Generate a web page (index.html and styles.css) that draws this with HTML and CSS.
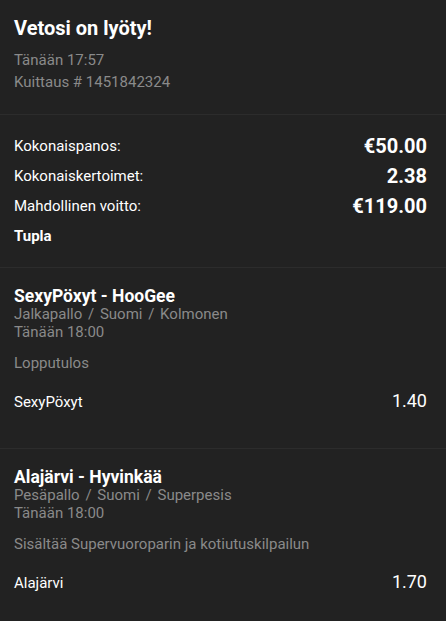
FILE: index.html
```html
<!DOCTYPE html>
<html lang="fi">
<head>
<meta charset="utf-8">
<title>Vetosi on lyöty!</title>
<link rel="stylesheet" href="styles.css">
</head>
<body>
<div class="receipt">
  <section class="sec head">
    <h1 class="title">Vetosi on lyöty!</h1>
    <div class="meta-line">Tänään 17:57</div>
    <div class="meta-line">Kuittaus # 1451842324</div>
  </section>
  <section class="sec totals">
    <div class="row"><span class="lbl">Kokonaispanos:</span><span class="val">€50.00</span></div>
    <div class="row"><span class="lbl">Kokonaiskertoimet:</span><span class="val">2.38</span></div>
    <div class="row"><span class="lbl">Mahdollinen voitto:</span><span class="val">€119.00</span></div>
    <div class="row"><span class="lbl type">Tupla</span></div>
  </section>
  <section class="sec event">
    <div class="ev-title">SexyPöxyt - HooGee</div>
    <div class="ev-meta">Jalkapallo <span class="sep">/</span> Suomi <span class="sep">/</span> Kolmonen</div>
    <div class="ev-meta">Tänään 18:00</div>
    <div class="ev-market">Lopputulos</div>
    <div class="sel"><span class="sel-name">SexyPöxyt</span><span class="sel-odds">1.40</span></div>
  </section>
  <section class="sec event">
    <div class="ev-title">Alajärvi - Hyvinkää</div>
    <div class="ev-meta">Pesäpallo <span class="sep">/</span> Suomi <span class="sep">/</span> Superpesis</div>
    <div class="ev-meta">Tänään 18:00</div>
    <div class="ev-market">Sisältää Supervuoroparin ja kotiutuskilpailun</div>
    <div class="sel"><span class="sel-name">Alajärvi</span><span class="sel-odds">1.70</span></div>
  </section>
</div>
</body>
</html>
```
FILE: styles.css
```css
html, body {
  margin: 0;
  padding: 0;
  background: #222222;
}
body {
  font-family: Roboto, "Liberation Sans", sans-serif;
  color: #ffffff;
  font-size: 15px;
}
.receipt {
  display: flex;
  flex-direction: column;
}
.sec {
  padding: 0 19px 0 14px;
  border-bottom: 1px solid #2c2c2c;
}
.head {
  padding-top: 16px;
  padding-bottom: 21px;
}
.title {
  margin: 0 0 10px;
  font-size: 20px;
  font-weight: 700;
  line-height: 24px;
}
.meta-line {
  color: #8a8a8a;
  line-height: 21.5px;
}
.totals {
  padding-top: 16px;
  padding-bottom: 16px;
}
.row {
  height: 30px;
  display: flex;
  align-items: center;
  justify-content: space-between;
}
.val {
  font-size: 20px;
  font-weight: 700;
}
.type {
  font-weight: 700;
}
.event {
  padding-top: 19px;
  padding-bottom: 37px;
}
.ev-title {
  font-size: 17.5px;
  font-weight: 700;
  line-height: 18px;
}
.ev-meta {
  color: #8a8a8a;
  line-height: 18px;
}
.sep {
  margin: 0 2px;
}
.ev-market {
  color: #8a8a8a;
  line-height: 18px;
  margin-top: 13px;
}
.sel {
  display: flex;
  align-items: baseline;
  justify-content: space-between;
  margin-top: 18px;
}
.sel-odds {
  font-size: 18px;
}
.event:last-child {
  border-bottom: none;
}
```
